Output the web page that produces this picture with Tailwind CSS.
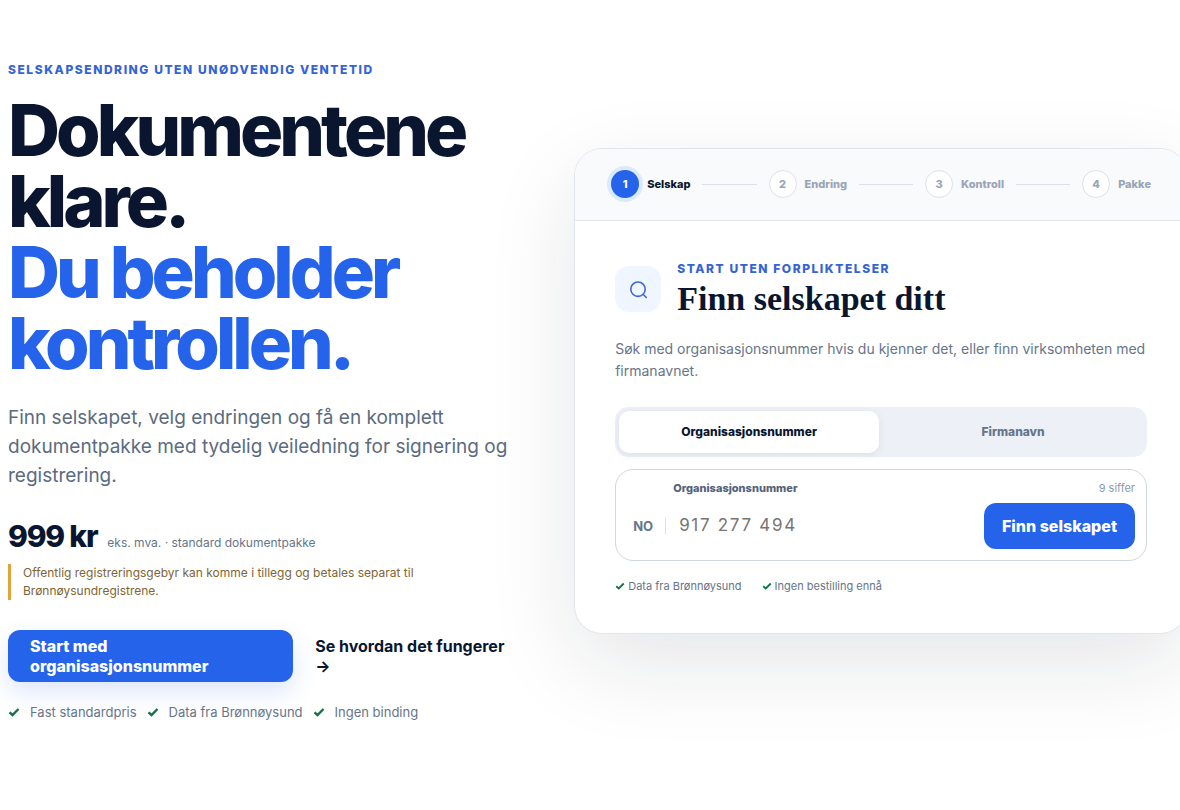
<!DOCTYPE html>
<html lang="no">
<head>
  <meta charset="UTF-8" />
  <meta name="viewport" content="width=device-width, initial-scale=1.0" />
  <title>Selskapsendring</title>
  <script src="https://cdn.jsdelivr.net/npm/@tailwindcss/browser@4"></script>
</head>
<body class="bg-white font-['Inter',sans-serif] text-[#0a162f] overflow-x-hidden">

  <main class="ml-2 w-full grid grid-cols-[9fr_11fr] gap-16 items-center pt-15 pb-22">

    <!-- Hero -->
    <section>
      <p class="text-xs leading-5 font-extrabold tracking-[0.13em] text-[#3463d4] uppercase">Selskapsendring uten unødvendig ventetid</p>
      <h1 class="mt-3.5 text-7xl leading-[71px] font-extrabold tracking-[-0.055em]">
        Dokumentene klare.
        <span class="block text-[#2563eb]">Du beholder kontrollen.</span>
      </h1>
      <p class="mt-[25px] text-[19px] leading-[29px] text-[#5b6b80]">Finn selskapet, velg endringen og få en komplett dokumentpakke med tydelig veiledning for signering og registrering.</p>

      <p class="mt-7 flex items-baseline gap-2.5">
        <strong class="text-3xl font-extrabold tracking-[-0.04em]">999 kr</strong>
        <span class="text-xs text-[#66758a]">eks. mva. · standard dokumentpakke</span>
      </p>
      <p class="mt-2.5 border-l-3 border-[#e2a33b] pl-3 text-xs leading-[18px] text-[#806534]">Offentlig registreringsgebyr kan komme i tillegg og betales separat til Brønnøysundregistrene.</p>

      <div class="mt-[30px] flex items-center gap-[22px]">
        <a href="#finn" class="flex-1 rounded-xl bg-[#2563eb] px-[22px] py-1.5 leading-5 font-extrabold text-white shadow-[0_10px_24px_rgba(37,99,235,0.16)]">Start med organisasjonsnummer</a>
        <a href="#" class="w-[195px] leading-5 font-bold">Se hvordan det fungerer →</a>
      </div>

      <ul class="mt-5 flex gap-2.5 text-[13px] leading-5 text-[#66758a]">
        <li class="flex items-center gap-2.5">
          <svg class="size-3" viewBox="0 0 12 12" fill="none" stroke="#157347" stroke-width="2.4"><path d="M1.5 6.3 4.5 9 10.5 3" /></svg>Fast standardpris
        </li>
        <li class="flex items-center gap-2.5">
          <svg class="size-3" viewBox="0 0 12 12" fill="none" stroke="#157347" stroke-width="2.4"><path d="M1.5 6.3 4.5 9 10.5 3" /></svg>Data fra Brønnøysund
        </li>
        <li class="flex items-center gap-2.5">
          <svg class="size-3" viewBox="0 0 12 12" fill="none" stroke="#157347" stroke-width="2.4"><path d="M1.5 6.3 4.5 9 10.5 3" /></svg>Ingen binding
        </li>
      </ul>
    </section>

    <!-- Search card -->
    <section id="finn" class="rounded-[28px] border border-[#e1e6ed] bg-white shadow-[0_30px_90px_rgba(15,23,42,0.11)]">
      <ol class="flex items-center gap-3 rounded-t-[27px] border-b border-[#e1e6ed] bg-[#f9fafc] px-9 pt-[21px] pb-[22px] text-[11px] font-extrabold text-[#98a4b8]">
        <li class="flex items-center gap-2 text-[#0a162f]">
          <span class="grid size-7 place-items-center rounded-full bg-[#2563eb] text-white ring-4 ring-blue-100">1</span>Selskap
        </li>
        <li class="h-px flex-1 bg-[#dbe1ea]" aria-hidden="true"></li>
        <li class="flex items-center gap-2">
          <span class="grid size-7 place-items-center rounded-full border border-[#dbe1ea] bg-white">2</span>Endring
        </li>
        <li class="h-px flex-1 bg-[#dbe1ea]" aria-hidden="true"></li>
        <li class="flex items-center gap-2">
          <span class="grid size-7 place-items-center rounded-full border border-[#dbe1ea] bg-white">3</span>Kontroll
        </li>
        <li class="h-px flex-1 bg-[#dbe1ea]" aria-hidden="true"></li>
        <li class="flex items-center gap-2">
          <span class="grid size-7 place-items-center rounded-full border border-[#dbe1ea] bg-white">4</span>Pakke
        </li>
      </ol>

      <div class="p-10">
        <div class="flex items-center gap-4">
          <span class="grid size-[46px] place-items-center rounded-[14px] bg-blue-50 text-[#3f66d6]">
            <svg class="size-5" viewBox="0 0 20 20" fill="none" stroke="currentColor" stroke-width="1.6" stroke-linecap="round"><circle cx="10" cy="10.2" r="7.2" /><path d="m15.3 15.5 3 3" /></svg>
          </span>
          <div>
            <p class="text-xs leading-4 font-extrabold tracking-[0.13em] text-[#3463d4] uppercase">Start uten forpliktelser</p>
            <h2 class="mt-1 font-['Liberation_Serif',serif] text-[34px] leading-9 font-bold">Finn selskapet ditt</h2>
          </div>
        </div>
        <p class="mt-[21px] text-sm leading-[22px] text-[#66758a]">Søk med organisasjonsnummer hvis du kjenner det, eller finn virksomheten med firmanavnet.</p>

        <div class="mt-[25px] grid grid-cols-2 gap-1 rounded-[14px] bg-[#edf1f7] p-1 text-xs font-extrabold">
          <button type="button" class="h-[42px] rounded-[10px] bg-white shadow-[0_2px_8px_rgba(15,23,42,0.08)]">Organisasjonsnummer</button>
          <button type="button" class="h-[42px] rounded-[10px] text-[#66758a]">Firmanavn</button>
        </div>

        <form class="mt-3 rounded-[18px] border border-[#cfd7e2] px-[11px] pt-2.5 pb-[11px]">
          <div class="flex justify-between pl-[46px] text-[11px] leading-4">
            <label for="orgnr" class="font-extrabold text-[#53627c]">Organisasjonsnummer</label>
            <span class="text-[#8d9ab0]">9 siffer</span>
          </div>
          <div class="mt-[7px] flex items-center pl-1.5">
            <span class="border-r border-[#dbe1ea] pr-3 text-[13px] leading-4 font-bold text-[#66758a]">NO</span>
            <input id="orgnr" type="text" inputmode="numeric" placeholder="917 277 494" class="min-w-0 flex-1 px-[13px] text-[17px] tracking-widest placeholder:text-[#757575] focus:outline-none" />
            <button type="submit" class="h-[46px] rounded-xl bg-[#2563eb] px-[18px] font-extrabold text-white">Finn selskapet</button>
          </div>
        </form>

        <ul class="mt-4 flex gap-5 text-[11px] leading-[18px] -mb-0.5 text-[#66758a]">
          <li class="flex items-center gap-[3px]">
            <svg class="size-2.5" viewBox="0 0 12 12" fill="none" stroke="#157347" stroke-width="2.2"><path d="M1.5 6.3 4.5 9 10.5 3" /></svg>Data fra Brønnøysund
          </li>
          <li class="flex items-center gap-[3px]">
            <svg class="size-2.5" viewBox="0 0 12 12" fill="none" stroke="#157347" stroke-width="2.2"><path d="M1.5 6.3 4.5 9 10.5 3" /></svg>Ingen bestilling ennå
          </li>
        </ul>
      </div>
    </section>
  </main>

</body>
</html>
